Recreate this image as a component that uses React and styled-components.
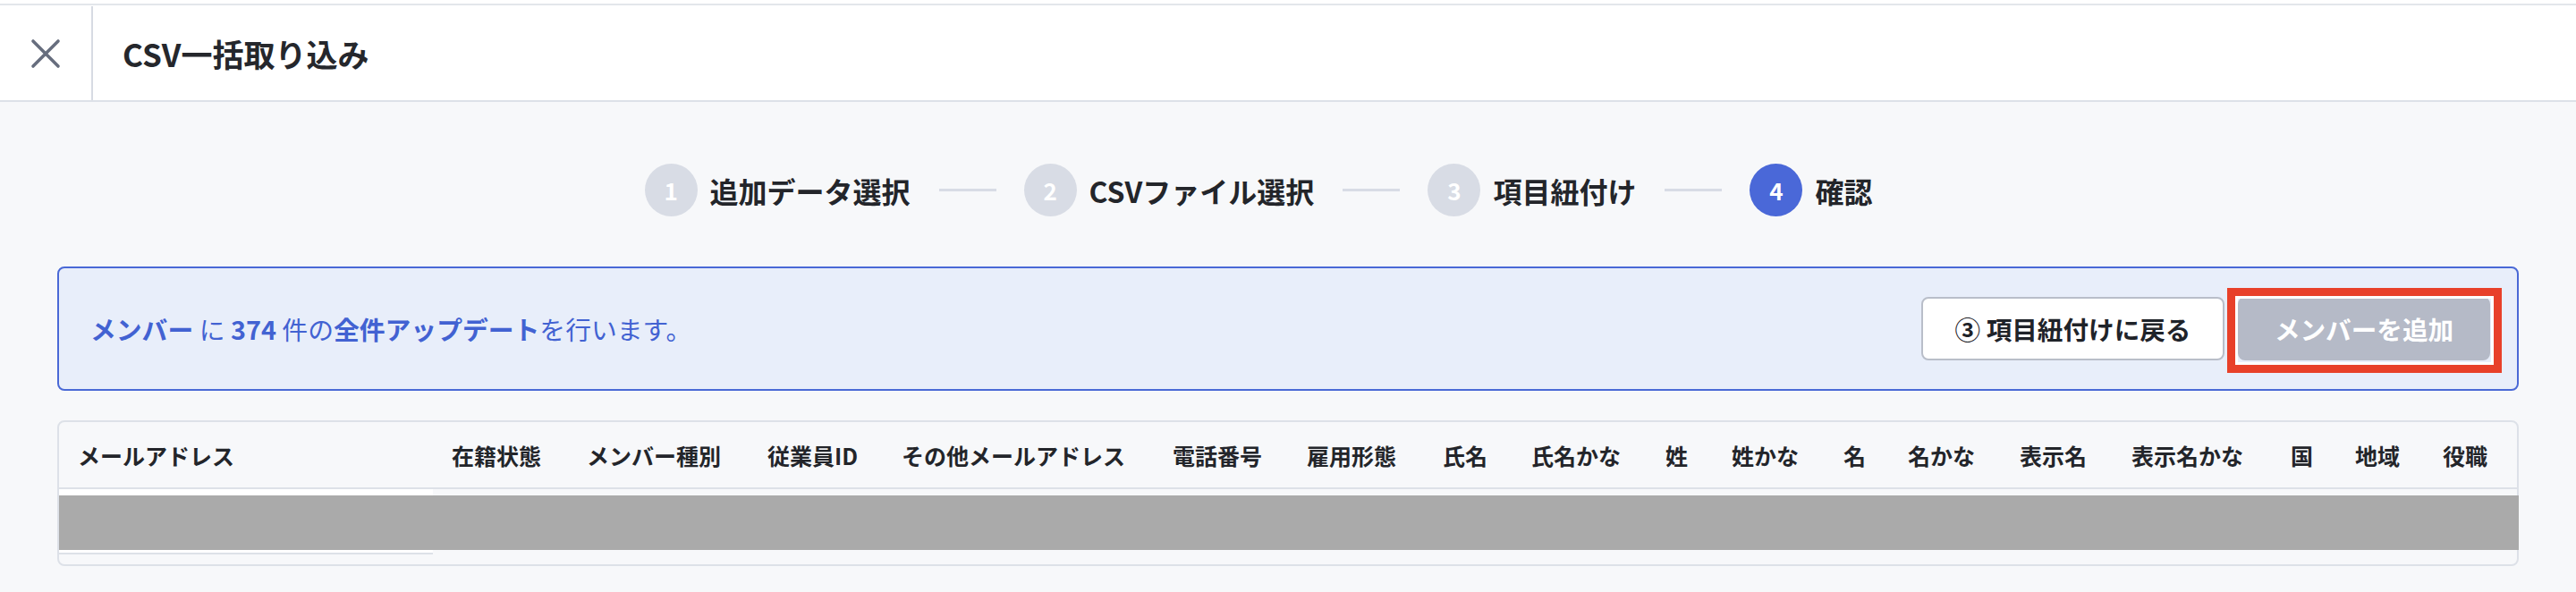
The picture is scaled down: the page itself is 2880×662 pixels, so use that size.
import React from 'react'
import styled, { createGlobalStyle } from 'styled-components'

const GlobalStyle = createGlobalStyle`
  html, body {
    margin: 0;
    padding: 0;
    background: #ffffff;
  }
  body {
    font-family: "Noto Sans CJK JP", "Noto Sans", sans-serif;
    color: #1f2329;
  }
  * { box-sizing: border-box; }
`

const Page = styled.div`
  display: flex;
  flex-direction: column;
  min-height: 100vh;
  padding-top: 4px;
  background: #ffffff;
`

const TopBar = styled.header`
  display: flex;
  align-items: stretch;
  height: 110px;
  border-top: 2px solid #e3e6eb;
  border-bottom: 2px solid #dde1e8;
  background: #ffffff;
`

const CloseButton = styled.button`
  display: flex;
  align-items: center;
  justify-content: center;
  width: 104px;
  margin-top: 1px;
  padding: 0;
  border: 0;
  border-right: 2px solid #d7dbe3;
  background: transparent;
  cursor: pointer;
`

const Title = styled.h1`
  display: flex;
  align-items: center;
  margin: 0;
  padding-left: 33px;
  font-size: 35px;
  font-weight: 700;
  color: #25272c;
`

const Main = styled.main`
  flex: 1;
  padding: 0 64px 29px;
  background: #f7f8fa;
`

const Stepper = styled.ol`
  display: flex;
  align-items: center;
  justify-content: center;
  margin: 0;
  padding: 69px 66px 56px 0;
  list-style: none;
`

const Step = styled.li`
  display: flex;
  align-items: center;
  gap: 14px;
`

const StepNumber = styled.span`
  display: flex;
  align-items: center;
  justify-content: center;
  width: 59px;
  height: 59px;
  border-radius: 50%;
  background: ${p => (p.$active ? '#4a68d8' : '#d8dce5')};
  color: #ffffff;
  font-size: 26px;
  font-weight: 700;
  line-height: 1;
`

const StepLabel = styled.span`
  font-size: 32px;
  font-weight: 700;
  color: #23252a;
  line-height: 1;
  white-space: nowrap;
`

const Connector = styled.li`
  width: 64px;
  height: 3px;
  margin: 0 31px 0 32px;
  background: #d8dce5;
`

const Banner = styled.section`
  display: flex;
  align-items: center;
  justify-content: space-between;
  padding: 32px 30px 32px 35px;
  border: 2px solid #4a69d6;
  border-radius: 8px;
  background: #e8eefa;
`

const Message = styled.p`
  margin: 0;
  font-size: 28.8px;
  color: #4262d2;
  white-space: nowrap;

  strong {
    font-weight: 700;
  }
`

const Actions = styled.div`
  display: flex;
  align-items: center;
  gap: 15px;
`

const Button = styled.button`
  display: flex;
  align-items: center;
  justify-content: center;
  width: ${p => p.$width}px;
  height: 71px;
  padding: 0;
  border-radius: 8px;
  border: 2px solid ${p => (p.$primary ? '#b5bac7' : '#b9bec9')};
  background: ${p => (p.$primary ? '#b5bac7' : '#ffffff')};
  color: ${p => (p.$primary ? '#ffffff' : '#1f2329')};
  font-family: inherit;
  font-size: 28.6px;
  font-weight: 700;
  white-space: nowrap;
  cursor: ${p => (p.$primary ? 'not-allowed' : 'pointer')};
`

const Highlight = styled.div`
  position: relative;

  &::after {
    content: '';
    position: absolute;
    top: -10px;
    left: -12px;
    right: -13px;
    bottom: -14px;
    border: 9px solid #e8402a;
    box-shadow: inset 0 0 0 3px #ffffff;
    pointer-events: none;
  }
`

const TableBox = styled.div`
  margin-top: 33px;
  padding-bottom: 11px;
  border: 2px solid #dde1e8;
  border-radius: 8px;
`

const Row = styled.div`
  position: relative;
  display: grid;
  grid-template-columns: ${p => p.$template};
  height: ${p => p.$height}px;
  border-bottom: ${p => (p.$head ? '2px solid #dde1e8' : '0')};
`

const HeadCell = styled.div`
  display: flex;
  align-items: center;
  padding-left: 21px;
  font-size: 25px;
  font-weight: 700;
  color: #23252a;
  white-space: nowrap;
`

const BodyCell = styled.div`
  background: ${p => (p.$sticky ? '#ffffff' : 'transparent')};
  border-bottom: ${p => (p.$sticky ? '2px solid #dde1e8' : '0')};
`

const Redacted = styled.div`
  position: absolute;
  top: 7px;
  left: 0;
  right: -2px;
  height: 61px;
  background: #aaaaaa;
`

const columns = [
  ['メールアドレス', null],
  ['在籍状態', 151],
  ['メンバー種別', 202],
  ['従業員ID', 150],
  ['その他メールアドレス', 303],
  ['電話番号', 150],
  ['雇用形態', 152],
  ['氏名', 99],
  ['氏名かな', 150],
  ['姓', 74],
  ['姓かな', 125],
  ['名', 72],
  ['名かな', 125],
  ['表示名', 125],
  ['表示名かな', 178],
  ['国', 72],
  ['地域', 98],
  ['役職', 104],
]

const template = columns.map(([, w]) => (w ? `${w}px` : '1fr')).join(' ')

const steps = ['追加データ選択', 'CSVファイル選択', '項目紐付け', '確認']

const CloseIcon = () => (
  <svg width="34" height="34" viewBox="0 0 34 34" fill="none">
    <path d="M3 3L31 31M31 3L3 31" stroke="#676e7e" strokeWidth="3.6" strokeLinecap="round" />
  </svg>
)

export default function App() {
  return (
    <>
      <GlobalStyle />
      <Page>
        <TopBar>
          <CloseButton aria-label="閉じる">
            <CloseIcon />
          </CloseButton>
          <Title>CSV一括取り込み</Title>
        </TopBar>
        <Main>
          <Stepper>
            {steps.map((label, i) => (
              <React.Fragment key={label}>
                {i > 0 && <Connector />}
                <Step>
                  <StepNumber $active={i === steps.length - 1}>{i + 1}</StepNumber>
                  <StepLabel>{label}</StepLabel>
                </Step>
              </React.Fragment>
            ))}
          </Stepper>

          <Banner>
            <Message>
              <strong>メンバー</strong> に <strong>374</strong> 件の<strong>全件アップデート</strong>を行います。
            </Message>
            <Actions>
              <Button $width={339}>③ 項目紐付けに戻る</Button>
              <Highlight>
                <Button $primary $width={282} disabled>
                  メンバーを追加
                </Button>
              </Highlight>
            </Actions>
          </Banner>

          <TableBox>
            <Row $head $template={template} $height={75}>
              {columns.map(([name]) => (
                <HeadCell key={name}>{name}</HeadCell>
              ))}
            </Row>
            <Row $template={template} $height={73}>
              {columns.map(([name], i) => (
                <BodyCell key={name} $sticky={i === 0} />
              ))}
              <Redacted />
            </Row>
          </TableBox>
        </Main>
      </Page>
    </>
  )
}
